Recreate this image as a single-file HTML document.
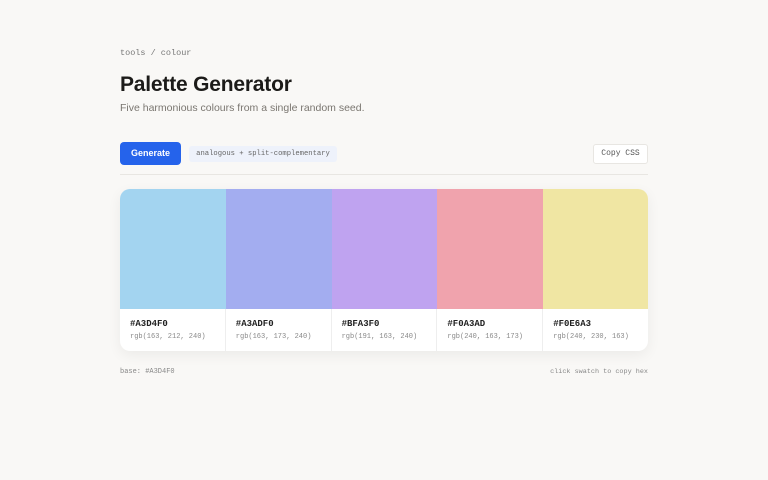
<!DOCTYPE html>
<html><head><style>
*{margin:0;padding:0;box-sizing:border-box}
body{width:768px;height:480px;background:#f9f8f6;font-family:"Liberation Sans",sans-serif;position:relative;overflow:hidden}
.mono{font-family:"Liberation Mono",monospace}
.a{position:absolute}
.sw{flex:1;border-right:1px solid #eee}
.sw>div:first-child{height:120px;margin-right:-1px}
.h{font-size:9px;font-weight:bold;color:#222}
.r{font-size:7px;color:#888;margin-top:4px}
</style></head><body>
<div class="a mono" style="left:120px;top:48px;font-size:8.5px;color:#777">tools / colour</div>
<div class="a" style="left:120px;top:73px;font-size:21px;font-weight:bold;color:#1c1b19;letter-spacing:-0.2px">Palette Generator</div>
<div class="a" style="left:120px;top:102px;font-size:10.5px;color:#7a7670">Five harmonious colours from a single random seed.</div>
<div class="a" style="left:120px;top:142px;width:61px;height:23px;background:#2563eb;border-radius:4px;color:#fff;font-size:9px;font-weight:bold;text-align:center;line-height:23px">Generate</div>
<div class="a mono" style="left:189px;top:146px;width:148px;height:16px;background:#eef2fb;border-radius:3px;color:#666;font-size:7.2px;text-align:center;line-height:16px">analogous + split-complementary</div>
<div class="a mono" style="left:593px;top:144px;width:55px;height:20px;background:#fff;border:1px solid #e8e6e2;border-radius:3px;color:#555;font-size:8px;text-align:center;line-height:18px">Copy CSS</div>
<div class="a" style="left:120px;top:174px;width:528px;height:1px;background:#e8e6e2"></div>
<div class="a" style="left:120px;top:189px;width:528px;height:162px;background:#fff;border-radius:10px;overflow:hidden;box-shadow:0 4px 14px rgba(0,0,0,0.06);display:flex">
<div class="sw"><div style="background:#A3D4F0"></div><div style="padding:10px 0 0 10px"><div class="mono h">#A3D4F0</div><div class="mono r">rgb(163, 212, 240)</div></div></div>
<div class="sw"><div style="background:#A3ADF0"></div><div style="padding:10px 0 0 10px"><div class="mono h">#A3ADF0</div><div class="mono r">rgb(163, 173, 240)</div></div></div>
<div class="sw"><div style="background:#BFA3F0"></div><div style="padding:10px 0 0 10px"><div class="mono h">#BFA3F0</div><div class="mono r">rgb(191, 163, 240)</div></div></div>
<div class="sw"><div style="background:#F0A3AD"></div><div style="padding:10px 0 0 10px"><div class="mono h">#F0A3AD</div><div class="mono r">rgb(240, 163, 173)</div></div></div>
<div class="sw" style="border-right:0"><div style="background:#F0E6A3;margin-right:0"></div><div style="padding:10px 0 0 10px"><div class="mono h">#F0E6A3</div><div class="mono r">rgb(240, 230, 163)</div></div></div>
</div>
<div class="a mono" style="left:120px;top:368px;font-size:7px;color:#888">base: #A3D4F0</div>
<div class="a mono" style="right:120px;top:368px;font-size:6.8px;color:#888">click swatch to copy hex</div>
</body></html>
